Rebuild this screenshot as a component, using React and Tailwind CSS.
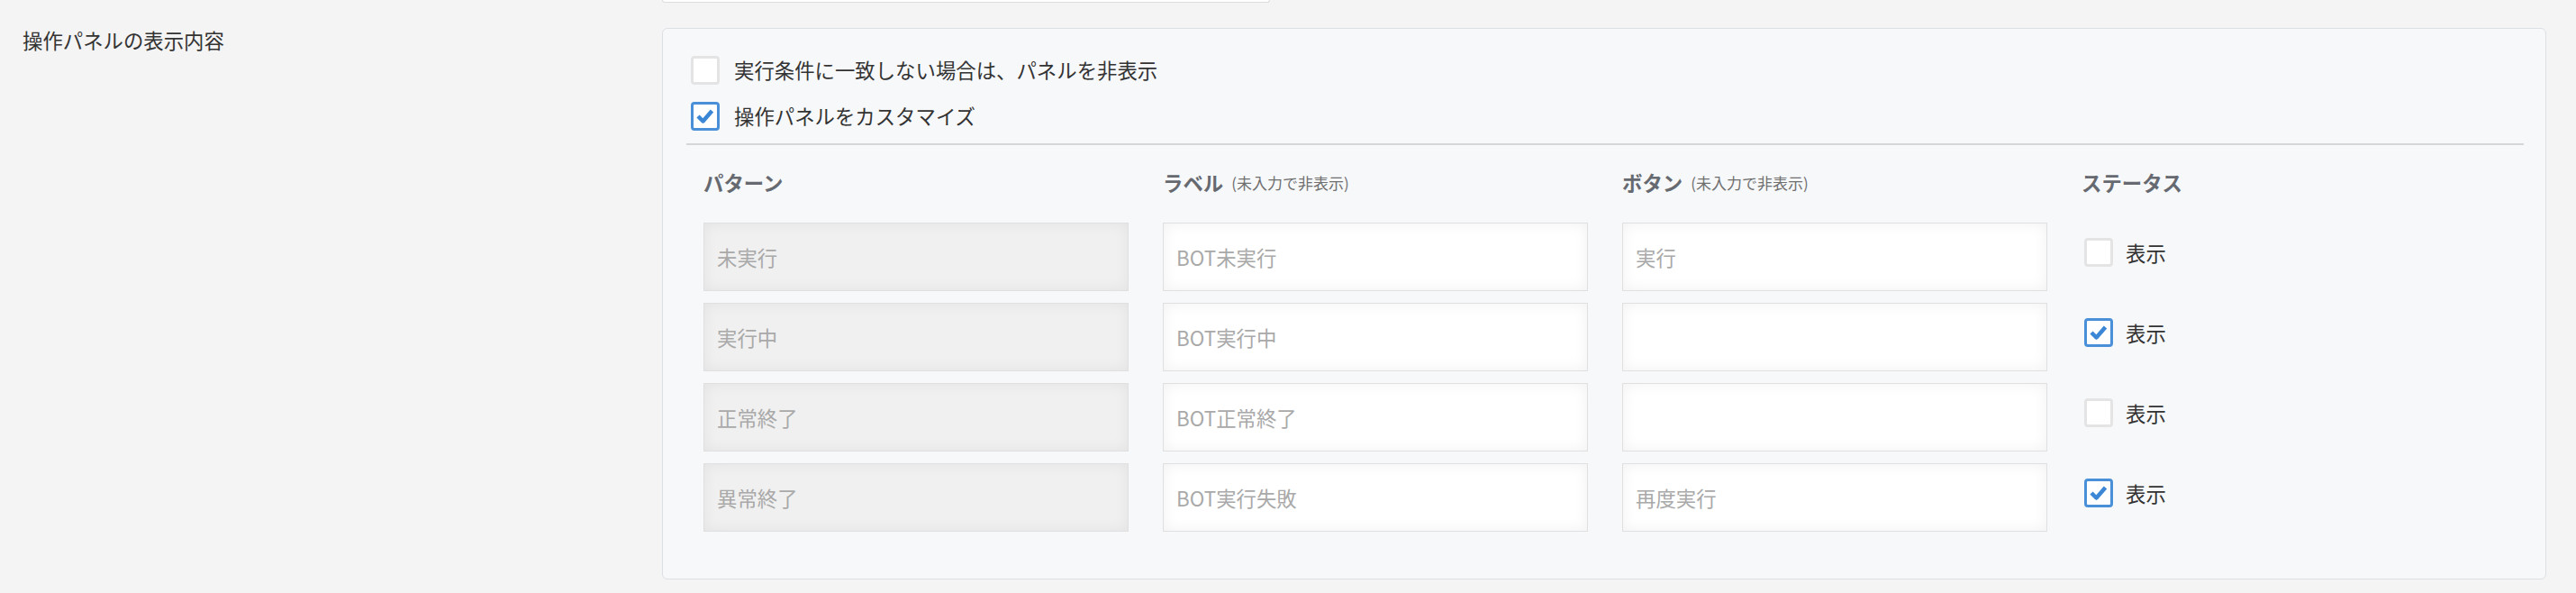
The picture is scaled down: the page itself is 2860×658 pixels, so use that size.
import React from "react";

const rows = [
  { pattern: "未実行", label: "BOT未実行", button: "実行", show: false },
  { pattern: "実行中", label: "BOT実行中", button: "", show: true },
  { pattern: "正常終了", label: "BOT正常終了", button: "", show: false },
  { pattern: "異常終了", label: "BOT実行失敗", button: "再度実行", show: true },
];

// square checkbox, blue frame + tick when checked
const Check = ({ checked }) => (
  <div
    className={
      checked
        ? "w-[32px] h-[32px] shrink-0 rounded-[4px] border-[3px] border-[#4a90d9] bg-white flex items-center justify-center"
        : "w-[32px] h-[32px] shrink-0 rounded-[4px] border-[3px] border-[#e4e4e4] bg-white"
    }
  >
    {checked && (
      <svg width="26" height="26" viewBox="0 0 26 26">
        <polyline
          points="5,13 10.5,18.5 20.5,7"
          fill="none"
          stroke="#3b87d6"
          strokeWidth="4.5"
          strokeLinejoin="round"
        />
      </svg>
    )}
  </div>
);

const Field = ({ text, disabled }) => (
  <input
    readOnly
    placeholder={text}
    className={
      (disabled ? "bg-[#f0f0f0] " : "bg-white ") +
      "w-full h-[76px] px-[14px] border border-[#e0e0e0] text-[22.4px] outline-none placeholder:text-[#a9a9a9] shadow-[inset_0_0_16px_rgba(0,0,0,0.06)]"
    }
  />
);

const Head = ({ title, note }) => (
  <div className="h-[32px] flex items-center text-[22.4px] font-bold text-[#666a70]">
    {title}
    {note && <span className="ml-[9px] text-[17px] font-normal text-[#6f6f6f]">{note}</span>}
  </div>
);

export default function App() {
  return (
    <div className="w-[2860px] h-[658px] bg-[#f4f4f4] text-[#333] font-['Noto_Sans_CJK_JP',sans-serif] overflow-hidden">
      {/* tail of the previous field */}
      <div className="ml-[735px] w-[675px] h-[3px] bg-white border-x border-b border-[#dddddd] rounded-b-[3px]" />

      <div className="flex mt-[28px]">
        <div className="w-[735px] pl-[25px] -mt-[3px] text-[22.4px] leading-[32px]">操作パネルの表示内容</div>

        <div className="w-[2092px] bg-[#f7f8fa] border border-[#dcdfe3] rounded-[6px] pt-[30px] pb-[52px] pl-[26px] pr-[24px]">
          <div className="pl-[5px] flex flex-col gap-[19px]">
            <label className="flex items-center gap-[16px] h-[32px] text-[22.4px]">
              <Check checked={false} />
              実行条件に一致しない場合は、パネルを非表示
            </label>
            <label className="flex items-center gap-[16px] h-[32px] text-[22.4px]">
              <Check checked={true} />
              操作パネルをカスタマイズ
            </label>
          </div>

          <div className="mt-[14px] h-[2px] bg-[#d4d6da]" />

          <div className="px-[19px] mt-[26px] grid grid-cols-[472px_472px_472px_1fr] gap-x-[38px]">
            <Head title="パターン" />
            <Head title="ラベル" note="(未入力で非表示)" />
            <Head title="ボタン" note="(未入力で非表示)" />
            <Head title="ステータス" />
          </div>

          <div className="px-[19px] mt-[28px] flex flex-col gap-[13px]">
            {rows.map((r) => (
              <div key={r.pattern} className="grid grid-cols-[472px_472px_472px_1fr] gap-x-[38px] items-center">
                <Field text={r.pattern} disabled />
                <Field text={r.label} />
                <Field text={r.button} />
                <div className="flex items-center gap-[14px] pl-[3px] text-[22.4px] -mt-[9px]">
                  <Check checked={r.show} />
                  表示
                </div>
              </div>
            ))}
          </div>
        </div>
      </div>
    </div>
  );
}
